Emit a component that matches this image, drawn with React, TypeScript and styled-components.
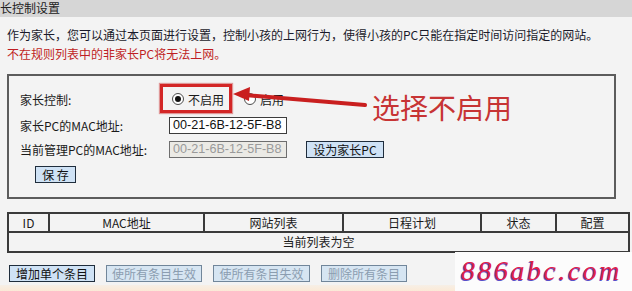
import React from "react";
import styled, { createGlobalStyle } from "styled-components";

const GlobalStyle = createGlobalStyle`
    html, body {
        margin: 0;
        padding: 0;
        background: #f3f3f3;
    }
    body {
        font-family: "Noto Sans CJK SC", sans-serif;
        font-size: 12px;
        color: #1a1a1a;
    }
`;

const Page = styled.div`
    position: relative;
    width: 632px;
    height: 291px;
    overflow: hidden;
    display: flex;
    flex-direction: column;
`;

const TitleBar = styled.div`
    height: 17px;
    background: #d6d6d6;
    font-size: 12px;
    line-height: 15px;
    color: #222;
`;

const Intro = styled.div`
    margin-top: 8px;
    padding: 0 7px;
`;

const IntroLine = styled.div<{ $warn?: boolean }>`
    height: 19px;
    line-height: 19px;
    white-space: nowrap;
    color: ${p => (p.$warn ? "#bf1f24" : "#1a1a2a")};
`;

const SettingsBox = styled.div`
    position: relative;
    margin: 11px 16px 0 7px;
    border: 2px solid #5c5c5c;
    padding: 9px 0 14px 11px;
`;

const FormRow = styled.div<{ $h: number }>`
    display: flex;
    align-items: center;
    height: ${p => p.$h}px;
`;

const FieldLabel = styled.div`
    width: 149px;
    flex-shrink: 0;
`;

const RadioGroup = styled.div`
    display: flex;
    align-items: center;
`;

const RadioOption = styled.label`
    display: flex;
    align-items: center;
    margin-left: 3px;
    margin-right: 17px;
    gap: 4px;
`;

const RadioDot = styled.span<{ $checked?: boolean }>`
    position: relative;
    width: 12px;
    height: 12px;
    box-sizing: border-box;
    border-radius: 50%;
    border: 1px solid #4d4d4d;
    background: #fff;

    &::after {
        content: "";
        display: ${p => (p.$checked ? "block" : "none")};
        position: absolute;
        left: 2px;
        top: 2px;
        width: 6px;
        height: 6px;
        border-radius: 50%;
        background: #111;
    }
`;

const TextField = styled.input`
    width: 118px;
    height: 17px;
    box-sizing: border-box;
    margin: 0;
    padding: 0 0 0 3px;
    border: 1px solid #3c3c3c;
    background: #fff;
    font-family: "Liberation Sans", Arial, sans-serif;
    font-size: 12.6px;
    color: #111;
    outline: none;

    &:disabled {
        background: #ebeae5;
        border-color: #6e6e6e;
        color: #9a9a9a;
    }
`;

const Button = styled.button<{ $w: number }>`
    width: ${p => p.$w}px;
    height: 17px;
    box-sizing: border-box;
    margin: 0;
    padding: 0;
    border: 1px solid #1f2d3c;
    background: #cfe2f5;
    font-family: "Noto Sans CJK SC", "Liberation Sans", sans-serif;
    font-size: 12px;
    line-height: 15px;
    color: #111;
    white-space: nowrap;

    &:disabled {
        border-color: #71869a;
        background: #d6e5f2;
        color: #8b9db0;
    }
`;

const SideButton = styled(Button)`
    margin-left: 19px;
`;

const SaveRow = styled.div`
    margin-top: 5px;
    padding-left: 15px;
`;

const Highlight = styled.div`
    position: absolute;
    left: 151px;
    top: 8px;
    width: 72px;
    height: 29px;
    box-sizing: border-box;
    border: 3px solid #d32626;
    box-shadow: 0 0 1px 1px rgba(200, 40, 40, 0.45);
`;

const ArrowSvg = styled.svg`
    position: absolute;
    left: 221px;
    top: 8px;
`;

const Callout = styled.div`
    position: absolute;
    left: 363px;
    top: 17px;
    font-size: 28px;
    line-height: 28px;
    color: #c73434;
    white-space: nowrap;
`;

const RuleTable = styled.table`
    margin: 13px 0 0 7px;
    width: 609px;
    table-layout: fixed;
    border-collapse: collapse;
    font-size: 12px;
    color: #1a1a1a;
`;

const HeadCell = styled.th<{ $w: number }>`
    width: ${p => p.$w}px;
    height: 17px;
    padding: 0;
    border: 2px solid #3a3a3a;
    font-weight: normal;
    text-align: center;
    line-height: 15px;
`;

const BodyCell = styled.td`
    height: 18px;
    padding: 0;
    border: 2px solid #3a3a3a;
    text-align: center;
    line-height: 16px;
`;

const ButtonBar = styled.div`
    display: flex;
    gap: 11px;
    margin: 12px 0 0 9px;
`;

const FooterStrip = styled.div`
    flex: 1;
    margin-top: 3px;
    background: linear-gradient(#f6efe6, #fbe9d6);
`;

const Watermark = styled.div`
    position: absolute;
    left: 455px;
    top: 252px;
    width: 177px;
    height: 39px;
    background: #fcfcfc;
    padding-left: 6px;
    box-sizing: border-box;
    font-family: "Liberation Serif", serif;
    font-style: italic;
    font-size: 28px;
    line-height: 38px;
    letter-spacing: 2.5px;
    color: #e0204a;
    text-shadow: -1px 1px 0 #5a4fc8;
    white-space: nowrap;
`;

const columns: [string, number][] = [
    ["ID", 39],
    ["MAC地址", 153],
    ["网站列表", 137],
    ["日程计划", 136],
    ["状态", 73],
    ["配置", 71],
];

const mac = "00-21-6B-12-5F-B8";

export default function App() {
    return (
        <Page>
            <GlobalStyle />
            <TitleBar>长控制设置</TitleBar>
            <Intro>
                <IntroLine>
                    作为家长，您可以通过本页面进行设置，控制小孩的上网行为，使得小孩的PC只能在指定时间访问指定的网站。
                </IntroLine>
                <IntroLine $warn>不在规则列表中的非家长PC将无法上网。</IntroLine>
            </Intro>
            <SettingsBox>
                <FormRow $h={28}>
                    <FieldLabel>家长控制:</FieldLabel>
                    <RadioGroup>
                        <RadioOption>
                            <RadioDot $checked />
                            不启用
                        </RadioOption>
                        <RadioOption>
                            <RadioDot />
                            启用
                        </RadioOption>
                    </RadioGroup>
                </FormRow>
                <FormRow $h={24}>
                    <FieldLabel>家长PC的MAC地址:</FieldLabel>
                    <TextField defaultValue={mac} />
                </FormRow>
                <FormRow $h={24}>
                    <FieldLabel>当前管理PC的MAC地址:</FieldLabel>
                    <TextField defaultValue={mac} disabled />
                    <SideButton $w={78}>设为家长PC</SideButton>
                </FormRow>
                <SaveRow>
                    <Button $w={41}>保 存</Button>
                </SaveRow>

                <Highlight />
                <ArrowSvg width="150" height="28" viewBox="0 0 150 28">
                    <line x1="15" y1="11" x2="135" y2="21" stroke="#c91f1f" strokeWidth="4" strokeLinecap="round" />
                    <polygon points="3,10 20,3 19,17" fill="#c91f1f" />
                </ArrowSvg>
                <Callout>选择不启用</Callout>
            </SettingsBox>

            <RuleTable>
                <thead>
                    <tr>
                        {columns.map(([name, w]) => (
                            <HeadCell key={name} $w={w}>
                                {name}
                            </HeadCell>
                        ))}
                    </tr>
                </thead>
                <tbody>
                    <tr>
                        <BodyCell colSpan={6}>当前列表为空</BodyCell>
                    </tr>
                </tbody>
            </RuleTable>

            <ButtonBar>
                <Button $w={86}>增加单个条目</Button>
                <Button $w={96} disabled>使所有条目生效</Button>
                <Button $w={97} disabled>使所有条目失效</Button>
                <Button $w={86} disabled>删除所有条目</Button>
            </ButtonBar>
            <FooterStrip />

            <Watermark>886abc.com</Watermark>
        </Page>
    );
}
